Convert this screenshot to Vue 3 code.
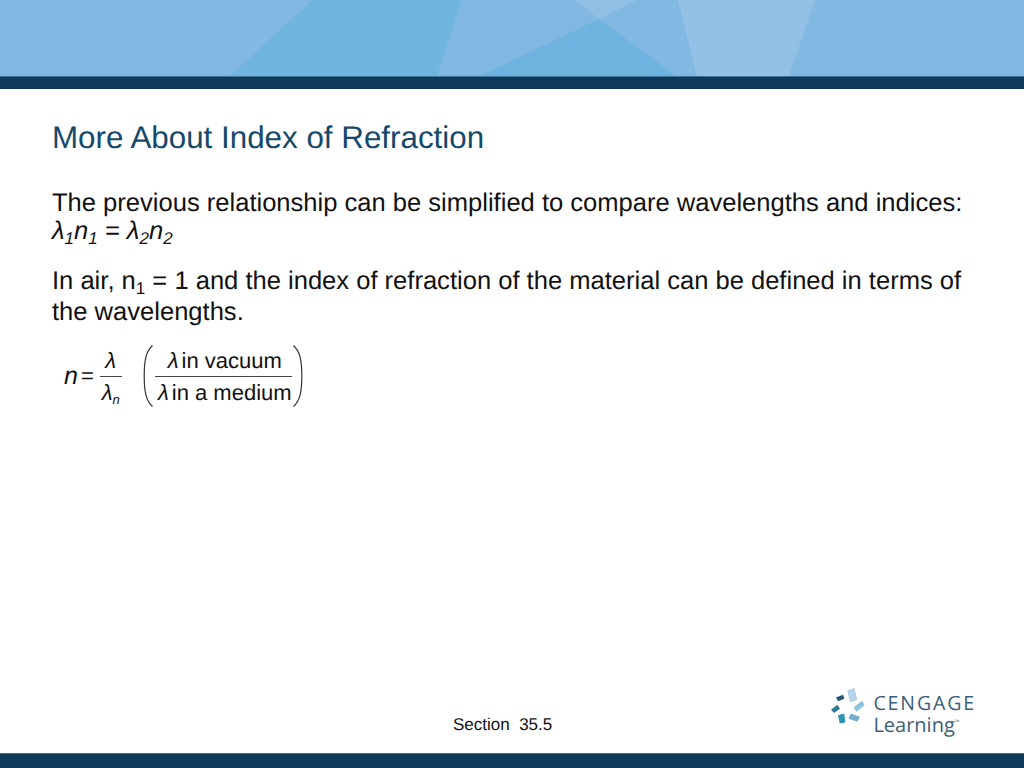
<script setup>
const paragraphs = {
  first: 'The previous relationship can be simplified to compare wavelengths and indices:',
  last: 'the wavelengths.'
}
</script>

<template>
  <div class="slide">
    <header class="banner">
      <svg class="banner-art" viewBox="0 0 1024 76" preserveAspectRatio="none" aria-hidden="true">
        <rect width="1024" height="76" fill="#82b9e2" />
        <polygon points="312,0 462,0 437,76 230,76" fill="#70b4e0" />
        <polygon points="462,0 575,0 599,19 480,76 437,76" fill="#80b8e1" />
        <polygon points="599,19 480,76 676,76" fill="#6fb3e0" />
        <polygon points="575,0 637,0 599,19" fill="#8fbfe4" />
        <polygon points="678,0 815,0 789,76 697,76" fill="#93c0e5" />
      </svg>
      <div class="banner-bar"></div>
    </header>

    <main class="content">
      <h1 class="title">More About Index of Refraction</h1>
      <p class="line">{{ paragraphs.first }}</p>
      <p class="line formula"><i>λ<sub>1</sub>n<sub>1</sub> = λ<sub>2</sub>n<sub>2</sub></i></p>
      <p class="line air">In air, n<sub class="plain">1</sub> = 1 and the index of refraction of the material can be defined in terms of</p>
      <p class="line">{{ paragraphs.last }}</p>

      <div class="equation">
        <i class="n">n</i>
        <span class="eq">=</span>
        <span class="frac small">
          <span class="top"><i>λ</i></span>
          <span class="bot"><i>λ<sub>n</sub></i></span>
        </span>
        <svg class="paren left" viewBox="0 0 10 62" aria-hidden="true">
          <path d="M9.5 0.5 C3.5 6 1.2 14 1.2 31 C1.2 48 3.5 56 9.5 61.5" />
        </svg>
        <span class="frac wide">
          <span class="top"><i class="lam">λ</i>in vacuum</span>
          <span class="bot"><i class="lam">λ</i>in a medium</span>
        </span>
        <svg class="paren right" viewBox="0 0 10 62" aria-hidden="true">
          <path d="M0.5 0.5 C6.5 6 8.8 14 8.8 31 C8.8 48 6.5 56 0.5 61.5" />
        </svg>
      </div>
    </main>

    <footer class="foot">
      <div class="foot-row">
        <span class="section">Section&nbsp; 35.5</span>
        <div class="logo">
          <svg class="logo-mark" viewBox="0 0 34 37" aria-hidden="true">
            <polygon points="16.8,2.7 23,0.6 25.8,11.7 19.4,13.8" fill="#b5d5e8" stroke="#8fbcd6" stroke-width="0.6" />
            <polygon points="5,9.6 12,6.8 13.4,10.8 7,13.2" fill="#1e5a78" />
            <polygon points="22.6,19.3 31.3,12.8 33.6,17.3 25.5,23.8" fill="#8cc3dc" />
            <polygon points="0,21.7 6.3,16.8 9,20.7 3,25" fill="#2a7a9c" />
            <polygon points="7,27.3 13.2,25.6 14.4,34.6 8.7,35.6" fill="#2d93b5" />
            <polygon points="19.7,25.6 29,28.8 26.3,33.8 17.6,30.7" fill="#73aecb" />
          </svg>
          <div class="logo-text">
            <span class="cengage">CENGAGE</span>
            <span class="learning">Learning<small>™</small></span>
          </div>
        </div>
      </div>
      <div class="foot-bar"></div>
    </footer>
  </div>
</template>

<style>
html, body { margin: 0; background: #fff; }
</style>

<style scoped>
.slide {
  width: 1024px;
  height: 768px;
  display: flex;
  flex-direction: column;
  overflow: hidden;
  background: #fff;
  font-family: "Liberation Sans", Arial, sans-serif;
  color: #111;
  text-rendering: geometricPrecision;
}
.banner-art { display: block; width: 1024px; height: 76px; }
.banner-bar {
  height: 12px;
  background: #0f3a5c;
  border-top: 1px solid #3d7396;
}
.content { flex: 1; padding: 32px 52px 0; }
.title {
  margin: 0 0 33px;
  font-size: 31.35px;
  line-height: 34px;
  font-weight: 400;
  color: #14496b;
}
.line {
  margin: 0;
  font-size: 25.56px;
  line-height: 31px;
  white-space: nowrap;
}
.formula { height: 31px; line-height: 25px; }
.air { margin-top: 16px; }
sub {
  font-size: 17px;
  line-height: 0;
  vertical-align: -5px;
}
.equation {
  display: flex;
  align-items: center;
  margin: 15px 0 0 12px;
  height: 66px;
  font-size: 22px;
}
.n { font-size: 25px; }
.eq { margin: 0 6px 0 3px; font-size: 22px; }
.frac { display: flex; flex-direction: column; align-items: center; }
.frac .top {
  line-height: 31px;
  border-bottom: 1px solid #444;
  align-self: stretch;
  text-align: center;
}
.frac .bot { line-height: 31px; }
.frac sub { font-size: 13px; vertical-align: -4px; }
.lam { margin-right: 3px; }
.wide .top, .wide .bot { padding-left: 3px; }
.small { width: 22px; }
.wide { width: 137px; }
.paren {
  width: 10px;
  height: 62px;
  flex: none;
  fill: none;
  stroke: #333;
  stroke-width: 1.2;
}
.left { margin: 0 2px 0 21px; }
.right { margin-left: 1px; }
.foot-row {
  display: flex;
  align-items: flex-end;
  justify-content: space-between;
  padding: 0 48px 19px 453px;
}
.section { font-size: 17px; line-height: 18px; color: #111; }
.logo { display: flex; align-items: flex-start; gap: 8px; }
.logo-mark { width: 34px; height: 37px; display: block; }
.logo-text {
  display: flex;
  flex-direction: column;
  padding-top: 4px;
  color: #3a6079;
  font-family: "Open Sans", sans-serif;
}
.cengage { font-size: 19.5px; line-height: 21px; letter-spacing: 1.9px; }
.learning { font-size: 20px; line-height: 19px; }
.learning small { font-size: 6px; vertical-align: 8px; }
.foot-bar { height: 15px; background: #0f3a5c; border-top: 1px solid #3d7396; box-sizing: border-box; }
</style>
